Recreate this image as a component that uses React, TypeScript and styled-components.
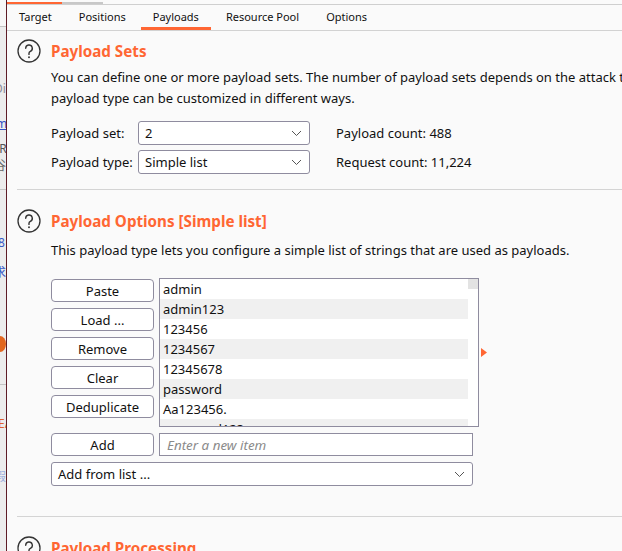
import React from "react";
import styled, { createGlobalStyle } from "styled-components";

const GlobalStyle = createGlobalStyle`
  html, body { margin: 0; padding: 0; background: #fafafa; }
  body { font-family: "Noto Sans", "Liberation Sans", sans-serif; color: #111; }
  * { box-sizing: border-box; }
`;

const ORANGE = "#ff6633";
const BORDER = "#8f8c9f";

const Window = styled.div`
  display: flex;
  width: 622px;
  height: 551px;
  overflow: hidden;
  background: #fafafa;
`;

const LeftStrip = styled.div`
  width: 6px;
  flex: none;
  background: linear-gradient(#f7f7f7 0, #f7f7f7 26px, #ececec 26px);
  display: flex;
  flex-direction: column;
  overflow: hidden;
`;

const StripLine = styled.div<{ $top: number }>`
  margin-top: ${(p) => p.$top}px;
  height: 1px;
  width: 6px;
  flex: none;
  background: #c4c4c4;
`;

const StripText = styled.div<{ $top: number; $color: string; $shift: number; $underline?: boolean }>`
  margin-top: ${(p) => p.$top}px;
  width: 6px;
  height: 14px;
  flex: none;
  overflow: hidden;
  white-space: nowrap;
  font-family: "Noto Sans", "Noto Sans CJK SC", sans-serif;
  font-size: 12px;
  line-height: 14px;
  color: ${(p) => p.$color};
  text-decoration: ${(p) => (p.$underline ? "underline" : "none")};
  text-indent: ${(p) => -p.$shift}px;
`;

const StripDot = styled.div<{ $top: number }>`
  margin-top: ${(p) => p.$top}px;
  width: 12px;
  height: 16px;
  margin-left: -6px;
  flex: none;
  border-radius: 50%;
  background: #e2661e;
`;

const Divider = styled.div`
  width: 1px;
  flex: none;
  background: #5e1c26;
`;

const Main = styled.div`
  flex: 1;
  display: flex;
  flex-direction: column;
  min-width: 0;
`;

const TopStrip = styled.div`
  height: 5px;
  flex: none;
  display: flex;
  align-items: flex-end;
  border-bottom: 1px solid #cfcfcf;
`;

const TopSeg = styled.div<{ $w: number; $color: string }>`
  width: ${(p) => p.$w}px;
  height: 2px;
  background: ${(p) => p.$color};
`;

const TabBar = styled.div`
  height: 26px;
  flex: none;
  display: flex;
  gap: 3px;
  border-bottom: 1px solid #d2d2d2;
`;

const Tab = styled.div<{ $active?: boolean }>`
  padding: 1px 12px 0;
  font-size: 11px;
  line-height: 21px;
  color: #111;
  border-bottom: 3px solid ${(p) => (p.$active ? ORANGE : "transparent")};
  white-space: nowrap;
`;

const Section = styled.div<{ $padTop: number; $padBottom: number }>`
  padding: ${(p) => p.$padTop}px 0 ${(p) => p.$padBottom}px 0;
  margin-left: 10px;
  border-bottom: 1px solid #d4d4d4;
  flex: none;
`;

const Header = styled.div`
  display: flex;
  align-items: center;
  gap: 10px;
  height: 24px;
`;

const Title = styled.div`
  color: ${ORANGE};
  font-weight: 700;
  font-size: 15.2px;
  white-space: nowrap;
`;

const Body = styled.div`
  padding-left: 34px;
`;

const Desc = styled.div<{ $mt: number }>`
  margin-top: ${(p) => p.$mt}px;
  font-size: 13px;
  line-height: 21px;
  white-space: nowrap;
`;

const FormGrid = styled.div`
  margin-top: 12px;
  display: grid;
  grid-template-columns: 87px 172px auto;
  row-gap: 5px;
  align-items: center;
  font-size: 13px;
`;

const Count = styled.div`
  padding-left: 26px;
  white-space: nowrap;
`;

const SelectBox = styled.div<{ $w?: number }>`
  height: 24px;
  ${(p) => (p.$w ? `width: ${p.$w}px;` : "")}
  border: 1px solid ${BORDER};
  border-radius: 3px;
  background: #fff;
  display: flex;
  align-items: center;
  justify-content: space-between;
  padding: 0 7px 0 6px;
  font-size: 13px;
`;

const ListArea = styled.div`
  margin-top: 17px;
  display: flex;
  align-items: flex-start;
`;

const ButtonCol = styled.div`
  display: flex;
  flex-direction: column;
  gap: 6px;
  width: 103px;
  padding-top: 1px;
`;

const Btn = styled.div`
  height: 23px;
  border: 1px solid ${BORDER};
  border-radius: 4px;
  background: #fff;
  display: flex;
  align-items: center;
  justify-content: center;
  font-size: 13px;
  width: 103px;
  flex: none;
`;

const ListBox = styled.div`
  margin-left: 5px;
  width: 320px;
  height: 149px;
  border: 1px solid ${BORDER};
  background: #fff;
  display: flex;
  overflow: hidden;
`;

const Rows = styled.div`
  flex: 1;
`;

const Row = styled.div<{ $alt: boolean }>`
  height: 20px;
  line-height: 20px;
  padding-left: 3px;
  font-size: 13px;
  background: ${(p) => (p.$alt ? "#f0f0f0" : "#fff")};
  white-space: nowrap;
`;

const ScrollTrack = styled.div`
  width: 10px;
  flex: none;
  background: #fff;
`;

const ScrollThumb = styled.div`
  height: 10px;
  background: #e3e3e3;
`;

const ArrowMark = styled.div`
  margin-left: 2px;
  margin-top: 70px;
  display: flex;
`;

const AddRow = styled.div`
  margin-top: 6px;
  display: flex;
  gap: 5px;
`;

const TextInput = styled.div`
  width: 314px;
  height: 23px;
  border: 1px solid ${BORDER};
  background: #fff;
  display: flex;
  align-items: center;
  padding-left: 7px;
  font-size: 13.4px;
  font-style: italic;
  color: #8a8a8a;
`;

const AddFromRow = styled.div`
  margin-top: 6px;
`;

const HelpIcon = () => (
  <svg width="24" height="24" viewBox="0 0 24 24" fill="none">
    <circle cx="12" cy="12" r="11" stroke="#333" strokeWidth="1.3" />
    <path
      d="M8.7 9.3a3.3 3.3 0 1 1 4.7 3c-.9.4-1.4 1-1.4 2v1.1"
      stroke="#333"
      strokeWidth="1.4"
      strokeLinecap="round"
    />
    <circle cx="12" cy="18.2" r="0.95" fill="#333" />
  </svg>
);

const Chevron = () => (
  <svg width="11" height="7" viewBox="0 0 11 7" fill="none">
    <path d="M1 1l4.5 4.5L10 1" stroke="#555" strokeWidth="1" />
  </svg>
);

const items = [
  "admin",
  "admin123",
  "123456",
  "1234567",
  "12345678",
  "password",
  "Aa123456.",
  "password123",
];

export default function App() {
  return (
    <>
      <GlobalStyle />
      <Window>
        <LeftStrip>
          <StripLine $top={26} />
          <StripText $top={55} $color="#8a8a96" $shift={6}>Di</StripText>
          <StripText $top={21} $color="#3552c4" $shift={4} $underline>m</StripText>
          <StripText $top={11} $color="#555" $shift={4}>,R</StripText>
          <StripText $top={3} $color="#666" $shift={6}>谷</StripText>
          <StripLine $top={16} />
          <StripText $top={46} $color="#3a5ac8" $shift={2}>8</StripText>
          <StripText $top={16} $color="#3a5ac8" $shift={6}>求</StripText>
          <StripDot $top={56} />
          <StripLine $top={32} />
          <StripText $top={32} $color="#e0602c" $shift={2}>E/</StripText>
          <StripText $top={39} $color="#9fb0e0" $shift={6}>假</StripText>
        </LeftStrip>
        <Divider />
        <Main>
          <TopStrip>
            <TopSeg $w={55} $color={ORANGE} />
            <TopSeg $w={41} $color="#c8c8c8" />
          </TopStrip>
          <TabBar>
            <Tab>Target</Tab>
            <Tab>Positions</Tab>
            <Tab $active>Payloads</Tab>
            <Tab>Resource Pool</Tab>
            <Tab>Options</Tab>
          </TabBar>

          <Section $padTop={8} $padBottom={15}>
            <Header>
              <HelpIcon />
              <Title>Payload Sets</Title>
            </Header>
            <Body>
              <Desc $mt={4}>
                You can define one or more payload sets. The number of payload sets depends on the attack type defined in the Positions tab. Various
                <br />
                payload type can be customized in different ways.
              </Desc>
              <FormGrid>
                <div>Payload set:</div>
                <SelectBox>
                  <span>2</span>
                  <Chevron />
                </SelectBox>
                <Count>Payload count: 488</Count>
                <div>Payload type:</div>
                <SelectBox>
                  <span>Simple list</span>
                  <Chevron />
                </SelectBox>
                <Count>Request count: 11,224</Count>
              </FormGrid>
            </Body>
          </Section>

          <Section $padTop={19} $padBottom={30}>
            <Header>
              <HelpIcon />
              <Title>Payload Options [Simple list]</Title>
            </Header>
            <Body>
              <Desc $mt={7}>
                This payload type lets you configure a simple list of strings that are used as payloads.
              </Desc>
              <ListArea>
                <ButtonCol>
                  <Btn>Paste</Btn>
                  <Btn>Load ...</Btn>
                  <Btn>Remove</Btn>
                  <Btn>Clear</Btn>
                  <Btn>Deduplicate</Btn>
                </ButtonCol>
                <ListBox>
                  <Rows>
                    {items.map((it, i) => (
                      <Row key={it} $alt={i % 2 === 1}>
                        {it}
                      </Row>
                    ))}
                  </Rows>
                  <ScrollTrack>
                    <ScrollThumb />
                  </ScrollTrack>
                </ListBox>
                <ArrowMark>
                  <svg width="6" height="9" viewBox="0 0 6 9">
                    <polygon points="0,0 6,4.5 0,9" fill={ORANGE} />
                  </svg>
                </ArrowMark>
              </ListArea>
              <AddRow>
                <Btn>Add</Btn>
                <TextInput>Enter a new item</TextInput>
              </AddRow>
              <AddFromRow>
                <SelectBox $w={422}>
                  <span>Add from list ...</span>
                  <Chevron />
                </SelectBox>
              </AddFromRow>
            </Body>
          </Section>

          <Section $padTop={19} $padBottom={0}>
            <Header>
              <HelpIcon />
              <Title>Payload Processing</Title>
            </Header>
          </Section>
        </Main>
      </Window>
    </>
  );
}
